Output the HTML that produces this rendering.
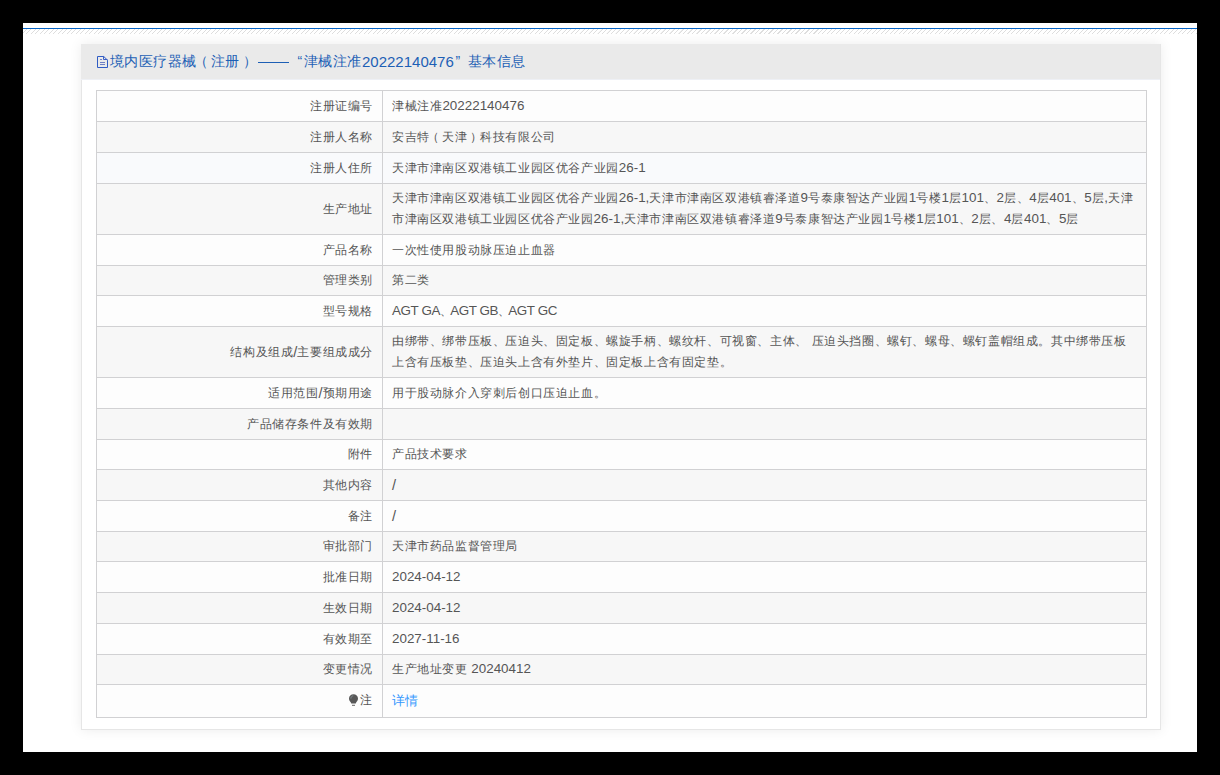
<!DOCTYPE html>
<html><head><meta charset="utf-8">
<style>
*{box-sizing:border-box}
html,body{margin:0;padding:0;background:#000;width:1220px;height:775px;overflow:hidden}
body{font-family:"Liberation Sans",sans-serif;position:relative}
#page{position:absolute;left:23px;top:23px;width:1174px;height:729px;background:#fff}
#bline{position:absolute;left:23px;top:28px;width:1174px;height:1px;background:#0664c6}
#hatch{position:absolute;left:23px;top:29px;width:1174px;height:5px;
 background:repeating-linear-gradient(135deg,#fff 0,#fff 2.35px,#dedede 2.45px,#dedede 3.18px)}
#panel{position:absolute;left:81px;top:44px;width:1080px;height:686px;background:#fff;border:1px solid #e6e6e6;box-shadow:0 0 12px rgba(0,0,0,0.08)}
#hdr{position:absolute;left:81px;top:44px;width:1079px;height:36px;background:#eaeaea;border-bottom:1px solid #eef0f5;color:#1d5fb5;font-size:14px;line-height:35px;white-space:nowrap}
#hdr svg{position:absolute;left:15px;top:11px}
.hs{position:absolute;top:0;letter-spacing:0.45px}
#dash{position:absolute;left:177px;top:18px;width:31px;height:1px;background:#1d5fb5}
.hn{font-size:15px;letter-spacing:0}
.row{position:absolute;left:96px;width:1051px;border:1px solid #d1d1d3;border-bottom:0;background:#fdfdfd;font-size:12.4px;letter-spacing:0.6px;color:#555;white-space:nowrap}
.row.last{border-bottom:1px solid #d1d1d3}
.row.g{background:#f7f7f7}
.row.hv{background:#f9fafc}
.n{font-size:13.4px;letter-spacing:0}
.agt{letter-spacing:-0.4px}
.dn{letter-spacing:-1.8px}
.lp{position:relative;left:-2.5px}
.rp{position:relative;left:2px}
.sl{font-size:14.6px;position:relative;top:1px}
.n,.sl{line-height:0}
.lab{position:absolute;left:0;top:0;width:286px;border-right:1px solid #d1d1d3;text-align:right;padding-right:9px}
.val{position:absolute;left:286px;top:0;width:763px;padding-left:9px}
.ln{height:21px}
.bulb{position:absolute;left:252px;top:9px}
a{color:#3598fe;text-decoration:none;font-size:13.4px;letter-spacing:0}
</style></head><body>
<div id="page"></div>
<div id="bline"></div><div id="hatch"></div>
<div id="panel"></div>
<div id="hdr"><svg width="14" height="15" viewBox="0 0 14 15"><path d="M1.5 1.5H7.8L11.5 5.2V12.5H1.5Z" fill="none" stroke="#2f5cc4" stroke-width="1"/><path d="M7.5 1.5V4.5H11.5" fill="none" stroke="#3a5fc6" stroke-width="1"/><path d="M4 4.5H6M4 7.5H9M4 9.5H9" stroke="#6f80c4" stroke-width="1"/></svg><span class="hs" style="left:29px">境内医疗器械</span><span class="hs" style="left:112.69999999999999px">（</span><span class="hs" style="left:130px">注册</span><span class="hs" style="left:161.5px">）</span><span class="hs" style="left:216.5px">“</span><span class="hs" style="left:223px">津械注准</span><span class="hs" style="left:281px"><span class="hn">20222140476</span></span><span class="hs" style="left:374.5px">”</span><span class="hs" style="left:387px">基本信息</span><div id="dash"></div></div>
<div class="row" style="top:90px;height:32px"><div class="lab" style="height:30px;line-height:30px">注册证编号</div><div class="val" style="height:30px;line-height:30px">津械注准<span class="n">20222140476</span></div></div>
<div class="row g" style="top:121px;height:32px"><div class="lab" style="height:30px;line-height:30px">注册人名称</div><div class="val" style="height:30px;line-height:30px">安吉特<span class="lp">（</span>天津<span class="rp">）</span>科技有限公司</div></div>
<div class="row hv" style="top:152px;height:32px"><div class="lab" style="height:30px;line-height:30px">注册人住所</div><div class="val" style="height:30px;line-height:30px">天津市津南区双港镇工业园区优谷产业园<span class="n">26-1</span></div></div>
<div class="row g" style="top:183px;height:52px"><div class="lab" style="height:50px;line-height:50px">生产地址</div><div class="val" style="height:50px;line-height:21px;padding-top:4px"><div class="ln">天津市津南区双港镇工业园区优谷产业园<span class="n">26-1,</span>天津市津南区双港镇睿泽道<span class="n">9</span>号泰康智达产业园<span class="n">1</span>号楼<span class="n">1</span>层<span class="n">101</span>、<span class="n">2</span>层、<span class="n">4</span>层<span class="n">401</span>、<span class="n">5</span>层<span class="n">,</span>天津</div><div class="ln">市津南区双港镇工业园区优谷产业园<span class="n">26-1,</span>天津市津南区双港镇睿泽道<span class="n">9</span>号泰康智达产业园<span class="n">1</span>号楼<span class="n">1</span>层<span class="n">101</span>、<span class="n">2</span>层、<span class="n">4</span>层<span class="n">401</span>、<span class="n">5</span>层</div></div></div>
<div class="row" style="top:234px;height:32px"><div class="lab" style="height:30px;line-height:30px">产品名称</div><div class="val" style="height:30px;line-height:30px">一次性使用股动脉压迫止血器</div></div>
<div class="row g" style="top:265px;height:31px"><div class="lab" style="height:29px;line-height:29px">管理类别</div><div class="val" style="height:29px;line-height:29px">第二类</div></div>
<div class="row" style="top:295px;height:32px"><div class="lab" style="height:30px;line-height:30px">型号规格</div><div class="val" style="height:30px;line-height:30px"><span class="n agt">AGT GA</span><span class="dn">、</span><span class="n agt">AGT GB</span><span class="dn">、</span><span class="n agt">AGT GC</span></div></div>
<div class="row g" style="top:326px;height:52px"><div class="lab" style="height:50px;line-height:50px">结构及组成<span class="n"><span class="sl">/</span></span>主要组成成分</div><div class="val" style="height:50px;line-height:21px;padding-top:4px"><div class="ln">由绑带、绑带压板、压迫头、固定板、螺旋手柄、螺纹杆、可视窗、主体、<span class="n"> </span>压迫头挡圈、螺钉、螺母、螺钉盖帽组成。其中绑带压板</div><div class="ln">上含有压板垫、压迫头上含有外垫片、固定板上含有固定垫。</div></div></div>
<div class="row" style="top:377px;height:32px"><div class="lab" style="height:30px;line-height:30px">适用范围<span class="n"><span class="sl">/</span></span>预期用途</div><div class="val" style="height:30px;line-height:30px">用于股动脉介入穿刺后创口压迫止血。</div></div>
<div class="row g" style="top:408px;height:32px"><div class="lab" style="height:30px;line-height:30px">产品储存条件及有效期</div><div class="val" style="height:30px;line-height:30px"></div></div>
<div class="row" style="top:439px;height:31px"><div class="lab" style="height:29px;line-height:29px">附件</div><div class="val" style="height:29px;line-height:29px">产品技术要求</div></div>
<div class="row g" style="top:469px;height:32px"><div class="lab" style="height:30px;line-height:30px">其他内容</div><div class="val" style="height:30px;line-height:30px"><span class="n"><span class="sl">/</span></span></div></div>
<div class="row" style="top:500px;height:32px"><div class="lab" style="height:30px;line-height:30px">备注</div><div class="val" style="height:30px;line-height:30px"><span class="n"><span class="sl">/</span></span></div></div>
<div class="row g" style="top:531px;height:31px"><div class="lab" style="height:29px;line-height:29px">审批部门</div><div class="val" style="height:29px;line-height:29px">天津市药品监督管理局</div></div>
<div class="row" style="top:561px;height:32px"><div class="lab" style="height:30px;line-height:30px">批准日期</div><div class="val" style="height:30px;line-height:30px"><span class="n">2024-04-12</span></div></div>
<div class="row g" style="top:592px;height:32px"><div class="lab" style="height:30px;line-height:30px">生效日期</div><div class="val" style="height:30px;line-height:30px"><span class="n">2024-04-12</span></div></div>
<div class="row" style="top:623px;height:32px"><div class="lab" style="height:30px;line-height:30px">有效期至</div><div class="val" style="height:30px;line-height:30px"><span class="n">2027-11-16</span></div></div>
<div class="row g" style="top:654px;height:31px"><div class="lab" style="height:29px;line-height:29px">变更情况</div><div class="val" style="height:29px;line-height:29px">生产地址变更<span class="n"> 20240412</span></div></div>
<div class="row last" style="top:684px;height:34px"><div class="lab" style="height:32px;line-height:30px"><svg class="bulb" width="10" height="13" viewBox="0 0 10 13"><path d="M4.5 0.2C7 0.2 9 2 9 4.5C9 6.2 8 7.3 7.3 8.3C6.9 8.9 6.8 9.3 6.8 9.6H2.2C2.2 9.3 2.1 8.9 1.7 8.3C1 7.3 0 6.2 0 4.5C0 2 2 0.2 4.5 0.2Z" fill="#585858"/><rect x="3" y="10.8" width="3" height="1" fill="#666"/><path d="M1.9 4.6C1.9 3 2.9 2 4.2 1.8" stroke="#8c9aa0" stroke-width=".8" fill="none"/></svg>注</div><div class="val" style="height:32px;line-height:32px"><a>详情</a></div></div>

</body></html>
